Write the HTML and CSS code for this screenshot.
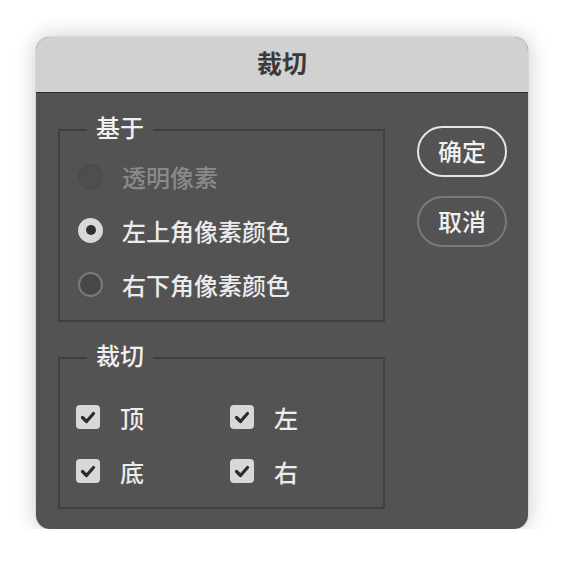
FILE: index.html
```html
<!DOCTYPE HTML>
<html lang="zh-CN">
<head>
    <meta charset="UTF-8">
    <meta name="viewport" content="width=device-width, initial-scale=1.0">
    <title>裁切</title>
    <link rel="stylesheet" href="styles.css">
</head>
<body>

    <div class="dialog">
        <div class="titlebar">裁切</div>

        <div class="content">
            <div class="options">
                <fieldset class="group">
                    <legend>基于</legend>
                    <div class="radio-list">
                        <label class="row disabled"><span class="radio"></span>透明像素</label>
                        <label class="row"><span class="radio checked"></span>左上角像素颜色</label>
                        <label class="row"><span class="radio"></span>右下角像素颜色</label>
                    </div>
                </fieldset>

                <fieldset class="group trim">
                    <legend>裁切</legend>
                    <div class="check-grid">
                        <label class="row"><span class="check"><svg viewBox="0 0 24 24"><path d="M6.5 12.5 L10.5 16.5 L17.5 8.5"/></svg></span>顶</label>
                        <label class="row"><span class="check"><svg viewBox="0 0 24 24"><path d="M6.5 12.5 L10.5 16.5 L17.5 8.5"/></svg></span>左</label>
                        <label class="row"><span class="check"><svg viewBox="0 0 24 24"><path d="M6.5 12.5 L10.5 16.5 L17.5 8.5"/></svg></span>底</label>
                        <label class="row"><span class="check"><svg viewBox="0 0 24 24"><path d="M6.5 12.5 L10.5 16.5 L17.5 8.5"/></svg></span>右</label>
                    </div>
                </fieldset>
            </div>

            <div class="buttons">
                <button class="btn primary">确定</button>
                <button class="btn">取消</button>
            </div>
        </div>
    </div>

</body>
</html>
```

FILE: styles.css
```css
/* Reset some default styles */
* {
    margin: 0;
    padding: 0;
    box-sizing: border-box;
}

body {
    font-family: "Noto Sans CJK SC", "Noto Sans", sans-serif;
    font-weight: 500;
    background-color: #ffffff;
    padding: 37px 0 0 36px;
}

/* Dialog window */
.dialog {
    width: 492px;
    height: 492px;
    border-radius: 14px;
    overflow: hidden;
    background-color: #535353;
    box-shadow: 0 0 22px rgba(0, 0, 0, 0.22), 0 0 0 1px rgba(0, 0, 0, 0.06);
    display: flex;
    flex-direction: column;
}

.titlebar {
    height: 56px;
    background-color: #d1d1d1;
    border-bottom: 1px solid #2c2c2c;
    color: #3a3a3a;
    font-size: 25px;
    font-weight: 700;
    text-align: center;
    line-height: 50px;
}

.content {
    flex: 1;
    display: flex;
    gap: 32px;
    padding: 17px 21px 0 22px;
}

.options {
    width: 327px;
    display: flex;
    flex-direction: column;
    gap: 16px;
}

/* Group boxes */
.group {
    border: 2px solid #3f3f3f;
    padding: 0;
}

.group legend {
    margin-left: 27px;
    padding: 0 9px 5px;
    color: #f0f0f0;
    font-size: 24px;
    line-height: 34px;
}

.row {
    display: flex;
    align-items: center;
    height: 54px;
    color: #ececec;
    font-size: 24px;
}

.row.disabled {
    color: #8a8a8a;
}

/* Radio buttons */
.radio-list {
    padding: 0 0 9px 18px;
}

.radio {
    width: 25px;
    height: 25px;
    border-radius: 50%;
    border: 2px solid #7b7b7b;
    background-color: #474747;
    margin-right: 19px;
    display: flex;
    align-items: center;
    justify-content: center;
}

.disabled .radio {
    border-color: #4b4b4b;
    background-color: #4e4e4e;
}

.radio.checked {
    border-color: #d8d8d8;
    background-color: #d8d8d8;
}

.radio.checked::after {
    content: "";
    width: 10px;
    height: 10px;
    border-radius: 50%;
    background-color: #303030;
}

/* Checkboxes */
.check-grid {
    display: grid;
    grid-template-columns: 154px 1fr;
    padding: 13px 0 9px 16px;
}

.check {
    width: 24px;
    height: 24px;
    border-radius: 4px;
    background-color: #d8d8d8;
    margin-right: 20px;
    display: flex;
}

.check svg {
    width: 24px;
    height: 24px;
    fill: none;
    stroke: #2c2c2c;
    stroke-width: 3.2;
    stroke-linecap: round;
    stroke-linejoin: round;
}

/* Buttons */
.buttons {
    display: flex;
    flex-direction: column;
    gap: 19px;
    padding-top: 16px;
}

.btn {
    width: 90px;
    height: 51px;
    border-radius: 26px;
    border: 2px solid #7a7a7a;
    background: transparent;
    color: #f0f0f0;
    font-family: inherit;
    font-weight: 500;
    font-size: 24px;
    padding-bottom: 3px;
    cursor: pointer;
}

.btn.primary {
    border-color: #e6e6e6;
}
```
